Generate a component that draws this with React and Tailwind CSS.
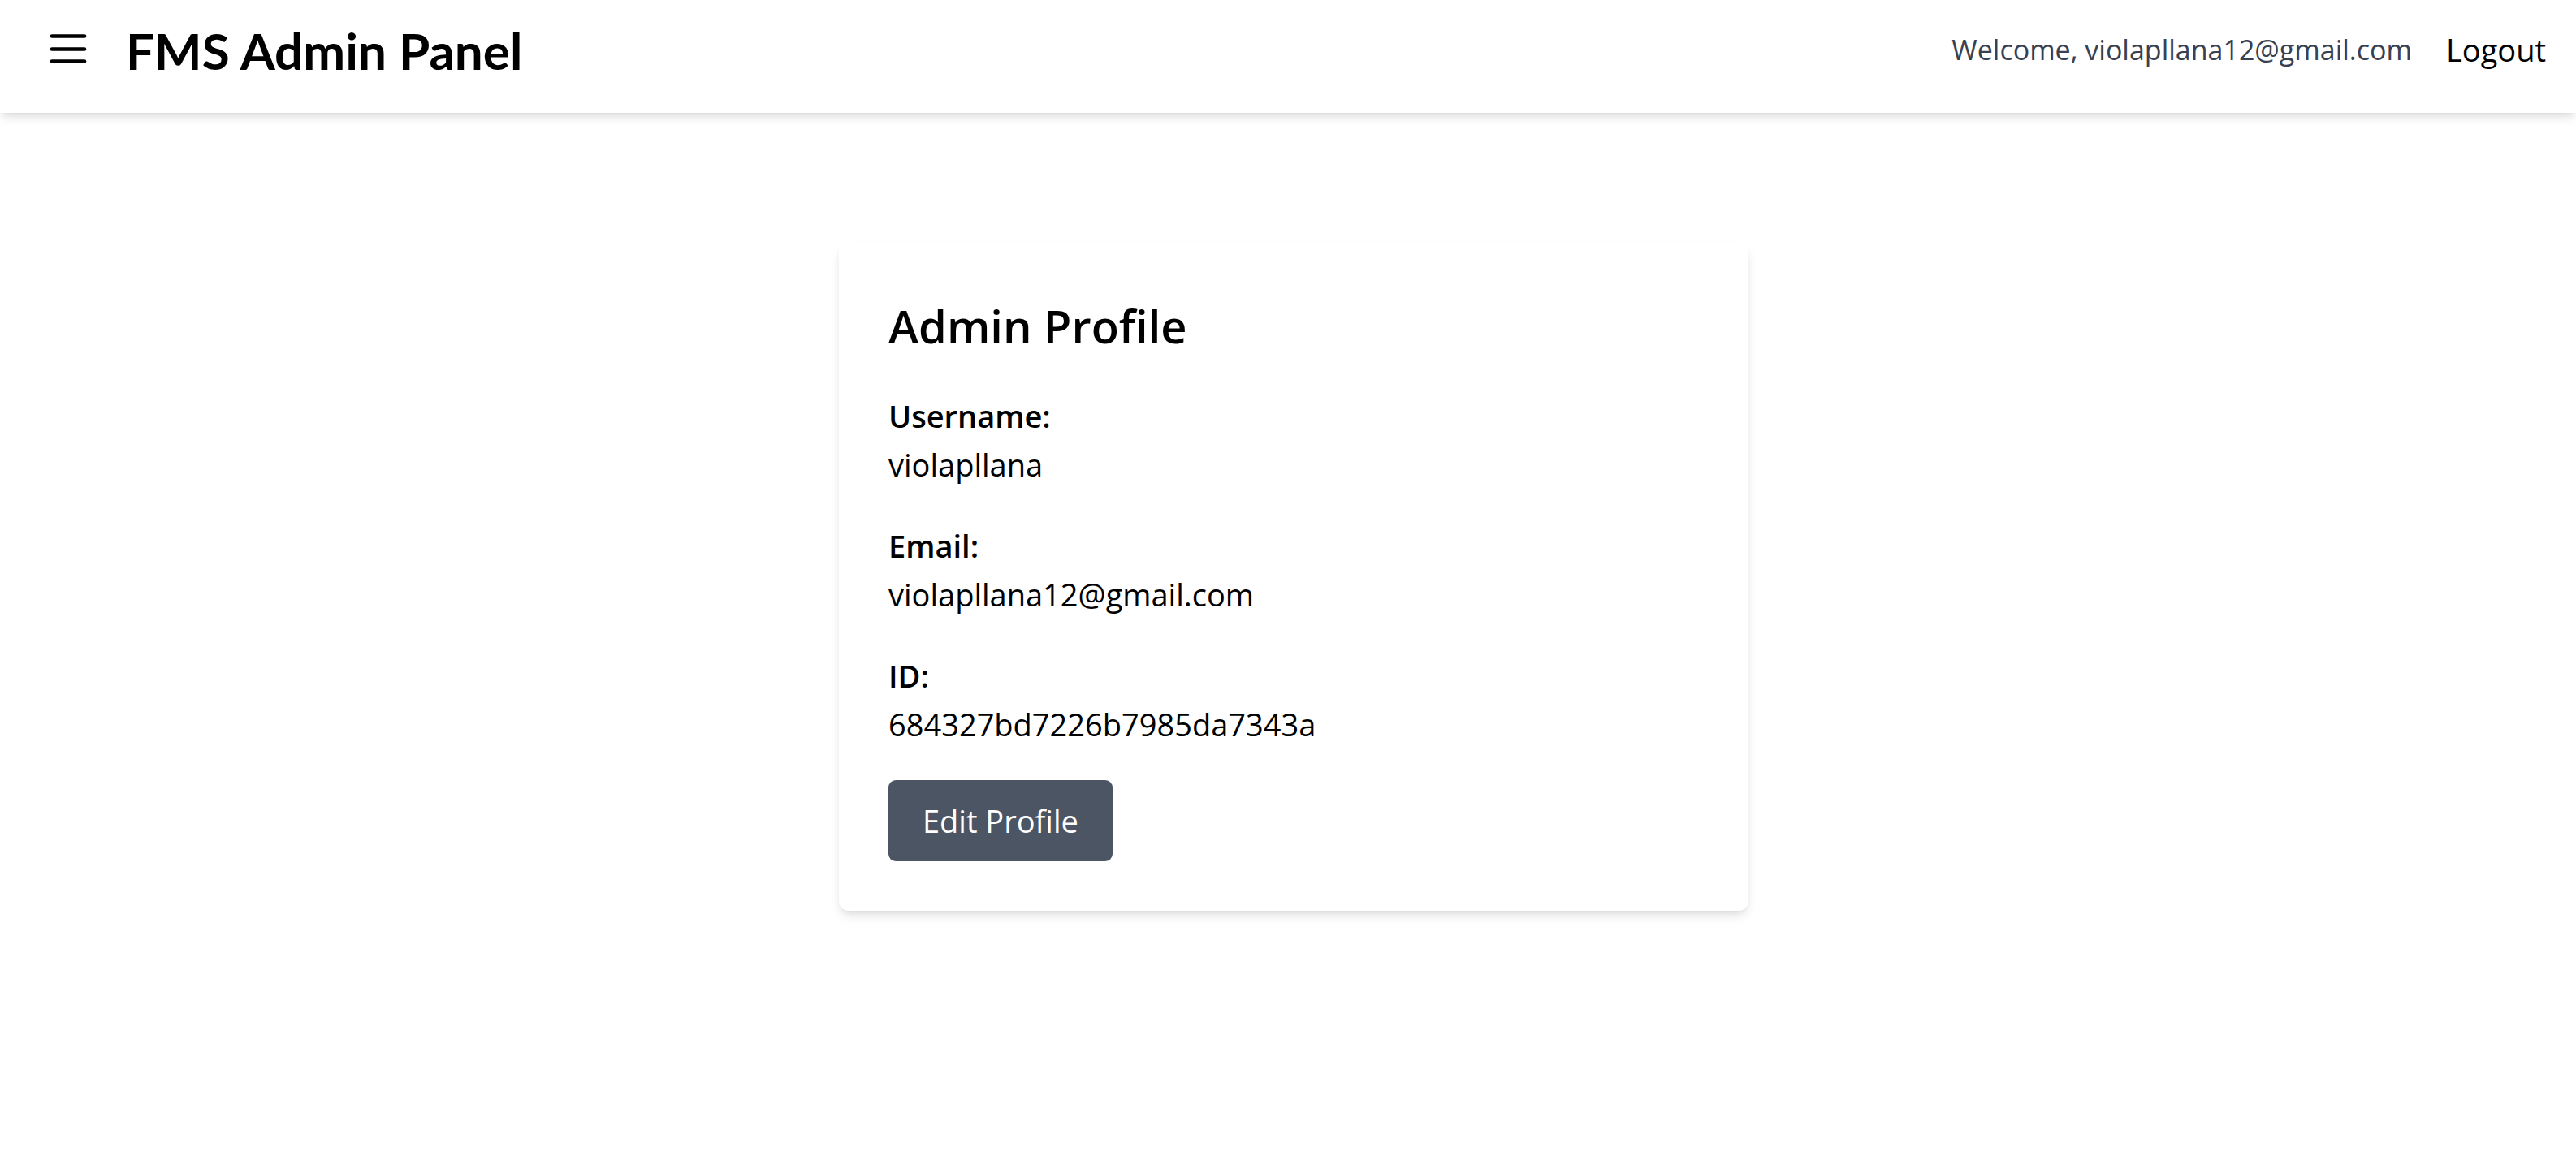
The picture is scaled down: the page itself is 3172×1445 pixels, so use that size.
import React from 'react'

const admin = {
  username: 'violapllana',
  email: 'violapllana12@gmail.com',
  id: '684327bd7226b7985da7343a',
}

function MenuIcon() {
  return (
    <svg width="48" height="48" viewBox="0 0 48 48" fill="none" stroke="currentColor" strokeWidth="4.6" strokeLinecap="round">
      <line x1="4" y1="6.5" x2="44" y2="6.5" />
      <line x1="4" y1="22.5" x2="44" y2="22.5" />
      <line x1="4" y1="37.5" x2="44" y2="37.5" />
    </svg>
  )
}

function Field({ label, value }) {
  return (
    <div className="flex flex-col">
      <span className="text-[38px] leading-[60px] font-semibold text-black">{label}</span>
      <span className="text-[38px] leading-[60px] text-black">{value}</span>
    </div>
  )
}

export default function App() {
  return (
    <div className="min-h-screen bg-white font-['Open_Sans',sans-serif]">
      {/* Top bar */}
      <header className="h-[139px] pb-[16px] pl-[60px] pr-[37px] flex items-center justify-between bg-white shadow-[0_8px_12px_-2px_rgba(0,0,0,0.1),0_4px_8px_-4px_rgba(0,0,0,0.1)] relative z-10">
        <div className="flex items-center gap-[47px]">
          <button className="text-black">
            <MenuIcon />
          </button>
          <h1 className="font-['Lato',sans-serif] font-bold text-[62px] leading-[74px] text-black">FMS Admin Panel</h1>
        </div>
        <div className="flex items-center gap-[42px]">
          <span className="text-[34px] leading-[51px] font-medium text-[#374151]">Welcome, {admin.email}</span>
          <button className="text-[38px] leading-[57px] text-black">Logout</button>
        </div>
      </header>

      {/* Profile */}
      <main className="flex justify-center pt-[159px] pl-[14px]">
        <div className="w-[1120px] bg-white rounded-[12px] pt-[70px] pb-[61px] px-[61px] shadow-[0_8px_14px_-2px_rgba(0,0,0,0.1),0_4px_8px_-4px_rgba(0,0,0,0.1)]">
          <h2 className="text-[56px] leading-[67px] font-semibold text-black mb-[47px]">Admin Profile</h2>
          <div className="flex flex-col gap-[40px]">
            <Field label="Username:" value={admin.username} />
            <Field label="Email:" value={admin.email} />
            <Field label="ID:" value={admin.id} />
          </div>
          <button className="mt-[39px] h-[100px] px-[42px] rounded-[9px] bg-[#4b5563] text-white text-[38px] leading-[60px]">
            Edit Profile
          </button>
        </div>
      </main>
    </div>
  )
}
